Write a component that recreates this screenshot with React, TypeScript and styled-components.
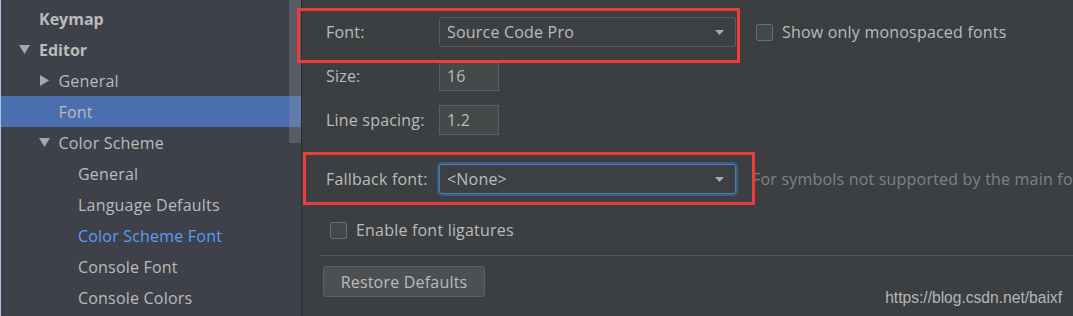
import React from 'react';
import styled, { createGlobalStyle } from 'styled-components';

const GlobalStyle = createGlobalStyle`
  html, body {
    margin: 0;
    padding: 0;
    background: #3c3f41;
  }
  body {
    font-family: "Open Sans", "Noto Sans", sans-serif;
    font-size: 16px;
    letter-spacing: 0.2px;
    color: #bbbbbb;
  }
`;

const Window = styled.div`
  display: flex;
  width: 1073px;
  height: 316px;
  overflow: hidden;
  background: #3c3f41;
`;

const Sidebar = styled.nav`
  position: relative;
  flex-shrink: 0;
  width: 302px;
  box-sizing: border-box;
  padding-top: 3px;
  background: #3e4149;
  border-left: 1px solid #a9c1e2;
  border-right: 1px solid #2b2d2f;
`;

const Scrollbar = styled.div`
  position: absolute;
  top: 0;
  right: 0;
  width: 12px;
  height: 143px;
  background: rgba(150, 155, 165, 0.3);
`;

const TreeRow = styled.div<{ $level: number; $selected?: boolean; $link?: boolean; $bold?: boolean }>`
  display: flex;
  align-items: center;
  height: 31px;
  padding-left: ${(p) => 38 + p.$level * 19.5}px;
  background: ${(p) => (p.$selected ? '#4b6eaf' : 'transparent')};
  color: ${(p) => (p.$link ? '#589df6' : '#bbbbbb')};
  font-weight: ${(p) => (p.$bold ? 700 : 400)};
  letter-spacing: ${(p) => (p.$bold ? 0 : 0.2)}px;
  position: relative;
  white-space: nowrap;
`;

const Arrow = styled.svg`
  position: absolute;
  margin-left: -20px;
  width: 11px;
  height: 11px;
`;

const Content = styled.main`
  position: relative;
  flex: 1;
  min-width: 0;
  display: flex;
  flex-direction: column;
  padding: 17px 0 0 24px;
`;

const FieldRow = styled.div<{ $top?: number }>`
  display: flex;
  align-items: center;
  margin-top: ${(p) => p.$top ?? 0}px;
`;

const Marked = styled.div<{ $inset: string }>`
  position: relative;
  display: flex;
  align-items: center;
  flex-shrink: 0;

  &::after {
    content: '';
    position: absolute;
    inset: ${(p) => p.$inset};
    border: 3px solid #ee3b3b;
    pointer-events: none;
  }
`;

const Label = styled.span`
  width: 113px;
  flex-shrink: 0;
  white-space: nowrap;
`;

const Combo = styled.div<{ $focused?: boolean }>`
  box-sizing: border-box;
  width: 297px;
  height: 30px;
  display: flex;
  align-items: center;
  justify-content: space-between;
  padding: 0 11px 0 7px;
  background: #3d4043;
  border: 1px solid ${(p) => (p.$focused ? '#4f7cb0' : '#5a5d5f')};
  border-radius: 3px;
  box-shadow: ${(p) => (p.$focused ? '0 0 0 2px #395c83' : 'none')};
  white-space: nowrap;
`;

const Caret = styled.svg`
  width: 9px;
  height: 5px;
`;

const NumberInput = styled.div`
  box-sizing: border-box;
  width: 60px;
  height: 30px;
  display: flex;
  align-items: center;
  padding-left: 7px;
  background: #45494a;
  border: 1px solid #5c5f61;
`;

const CheckLabel = styled.label<{ $left?: number }>`
  display: flex;
  align-items: center;
  gap: 9px;
  margin-left: ${(p) => p.$left ?? 0}px;
  white-space: nowrap;
`;

const Box = styled.span`
  box-sizing: border-box;
  width: 17px;
  height: 17px;
  background: #43494a;
  border: 1px solid #6b6e70;
  border-radius: 2px;
`;

const Hint = styled.span`
  margin-left: 16px;
  color: #7f8285;
  white-space: nowrap;
`;

const Divider = styled.hr`
  border: none;
  height: 1px;
  background: #55585a;
  margin: 14px 0 0 -6px;
`;

const Button = styled.button`
  align-self: flex-start;
  margin: 10px 0 0 -3px;
  width: 162px;
  height: 31px;
  background: #4c5052;
  border: 1px solid #5e6163;
  border-radius: 3px;
  color: #bbbbbb;
  font: inherit;
  letter-spacing: inherit;
`;

const Watermark = styled.span`
  position: absolute;
  right: 11px;
  bottom: 9px;
  font-family: "Liberation Sans", Arial, sans-serif;
  font-size: 15.6px;
  letter-spacing: 0;
  color: #b4b6b8;
`;

const tree = [
  { text: 'Keymap', level: 0, bold: true },
  { text: 'Editor', level: 0, bold: true, arrow: 'down' },
  { text: 'General', level: 1, arrow: 'right' },
  { text: 'Font', level: 1, selected: true },
  { text: 'Color Scheme', level: 1, arrow: 'down' },
  { text: 'General', level: 2 },
  { text: 'Language Defaults', level: 2 },
  { text: 'Color Scheme Font', level: 2, link: true },
  { text: 'Console Font', level: 2 },
  { text: 'Console Colors', level: 2 },
];

const DropCaret = () => (
  <Caret viewBox="0 0 9 5">
    <path d="M0 0 H9 L4.5 5 Z" fill="#a9abad" />
  </Caret>
);

const App = () => {
  return (
    <Window>
      <GlobalStyle />
      <Sidebar>
        {tree.map((item, i) => (
          <TreeRow key={i} $level={item.level} $selected={item.selected} $link={item.link} $bold={item.bold}>
            {item.arrow && (
              <Arrow viewBox="0 0 11 11">
                {item.arrow === 'down' ? (
                  <path d="M0 1 H11 L5.5 10 Z" fill="#a4a7ab" />
                ) : (
                  <path d="M1 0 L10 5.5 L1 11 Z" fill="#a4a7ab" />
                )}
              </Arrow>
            )}
            {item.text}
          </TreeRow>
        ))}
        <Scrollbar />
      </Sidebar>
      <Content>
        <FieldRow>
          <Marked $inset="-9px -4px -16px -29px">
            <Label>Font:</Label>
            <Combo>
              Source Code Pro
              <DropCaret />
            </Combo>
          </Marked>
          <CheckLabel $left={20}>
            <Box />
            Show only monospaced fonts
          </CheckLabel>
        </FieldRow>
        <FieldRow $top={14}>
          <Label>Size:</Label>
          <NumberInput>16</NumberInput>
        </FieldRow>
        <FieldRow $top={14}>
          <Label>Line spacing:</Label>
          <NumberInput>1.2</NumberInput>
        </FieldRow>
        <FieldRow $top={29}>
          <Marked $inset="-12px -19px -11px -23px">
            <Label>Fallback font:</Label>
            <Combo $focused>
              &lt;None&gt;
              <DropCaret />
            </Combo>
          </Marked>
          <Hint>For symbols not supported by the main font</Hint>
        </FieldRow>
        <FieldRow $top={25}>
          <CheckLabel $left={4}>
            <Box />
            Enable font ligatures
          </CheckLabel>
        </FieldRow>
        <Divider />
        <Button>Restore Defaults</Button>
        <Watermark>https://blog.csdn.net/baixf</Watermark>
      </Content>
    </Window>
  );
};

export default App;
